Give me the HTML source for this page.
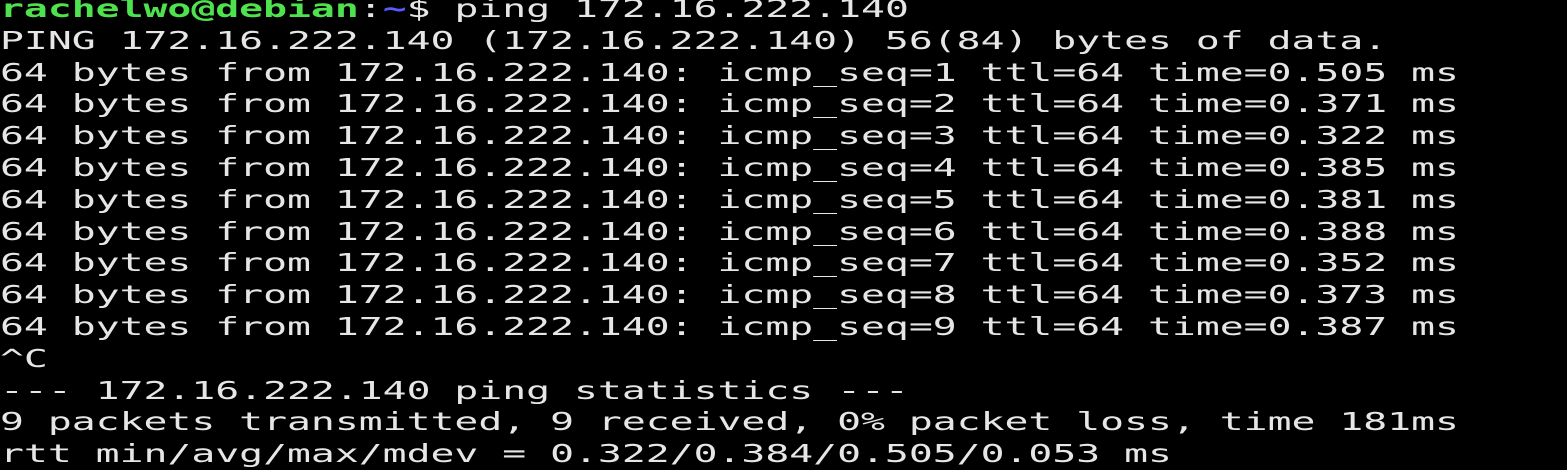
<!DOCTYPE html>
<html><head><style>
html,body{margin:0;padding:0;background:#000;width:1567px;height:466px;overflow:hidden}
pre{position:absolute;left:0;top:-7px;margin:0;font-family:"DejaVu Sans Mono","Liberation Mono",monospace;font-size:25px;line-height:31.8px;color:#e6e6e6;transform:scaleX(1.589);transform-origin:0 0;white-space:pre}
.g{color:#4fe24f;font-weight:bold}.b{color:#5a5aff;font-weight:bold}
</style></head><body>
<pre><span class="g">rachelwo@debian</span>:<span class="b">~</span>$ ping 172.16.222.140
PING 172.16.222.140 (172.16.222.140) 56(84) bytes of data.
64 bytes from 172.16.222.140: icmp_seq=1 ttl=64 time=0.505 ms
64 bytes from 172.16.222.140: icmp_seq=2 ttl=64 time=0.371 ms
64 bytes from 172.16.222.140: icmp_seq=3 ttl=64 time=0.322 ms
64 bytes from 172.16.222.140: icmp_seq=4 ttl=64 time=0.385 ms
64 bytes from 172.16.222.140: icmp_seq=5 ttl=64 time=0.381 ms
64 bytes from 172.16.222.140: icmp_seq=6 ttl=64 time=0.388 ms
64 bytes from 172.16.222.140: icmp_seq=7 ttl=64 time=0.352 ms
64 bytes from 172.16.222.140: icmp_seq=8 ttl=64 time=0.373 ms
64 bytes from 172.16.222.140: icmp_seq=9 ttl=64 time=0.387 ms
^C
--- 172.16.222.140 ping statistics ---
9 packets transmitted, 9 received, 0% packet loss, time 181ms
rtt min/avg/max/mdev = 0.322/0.384/0.505/0.053 ms</pre>
</body></html>
